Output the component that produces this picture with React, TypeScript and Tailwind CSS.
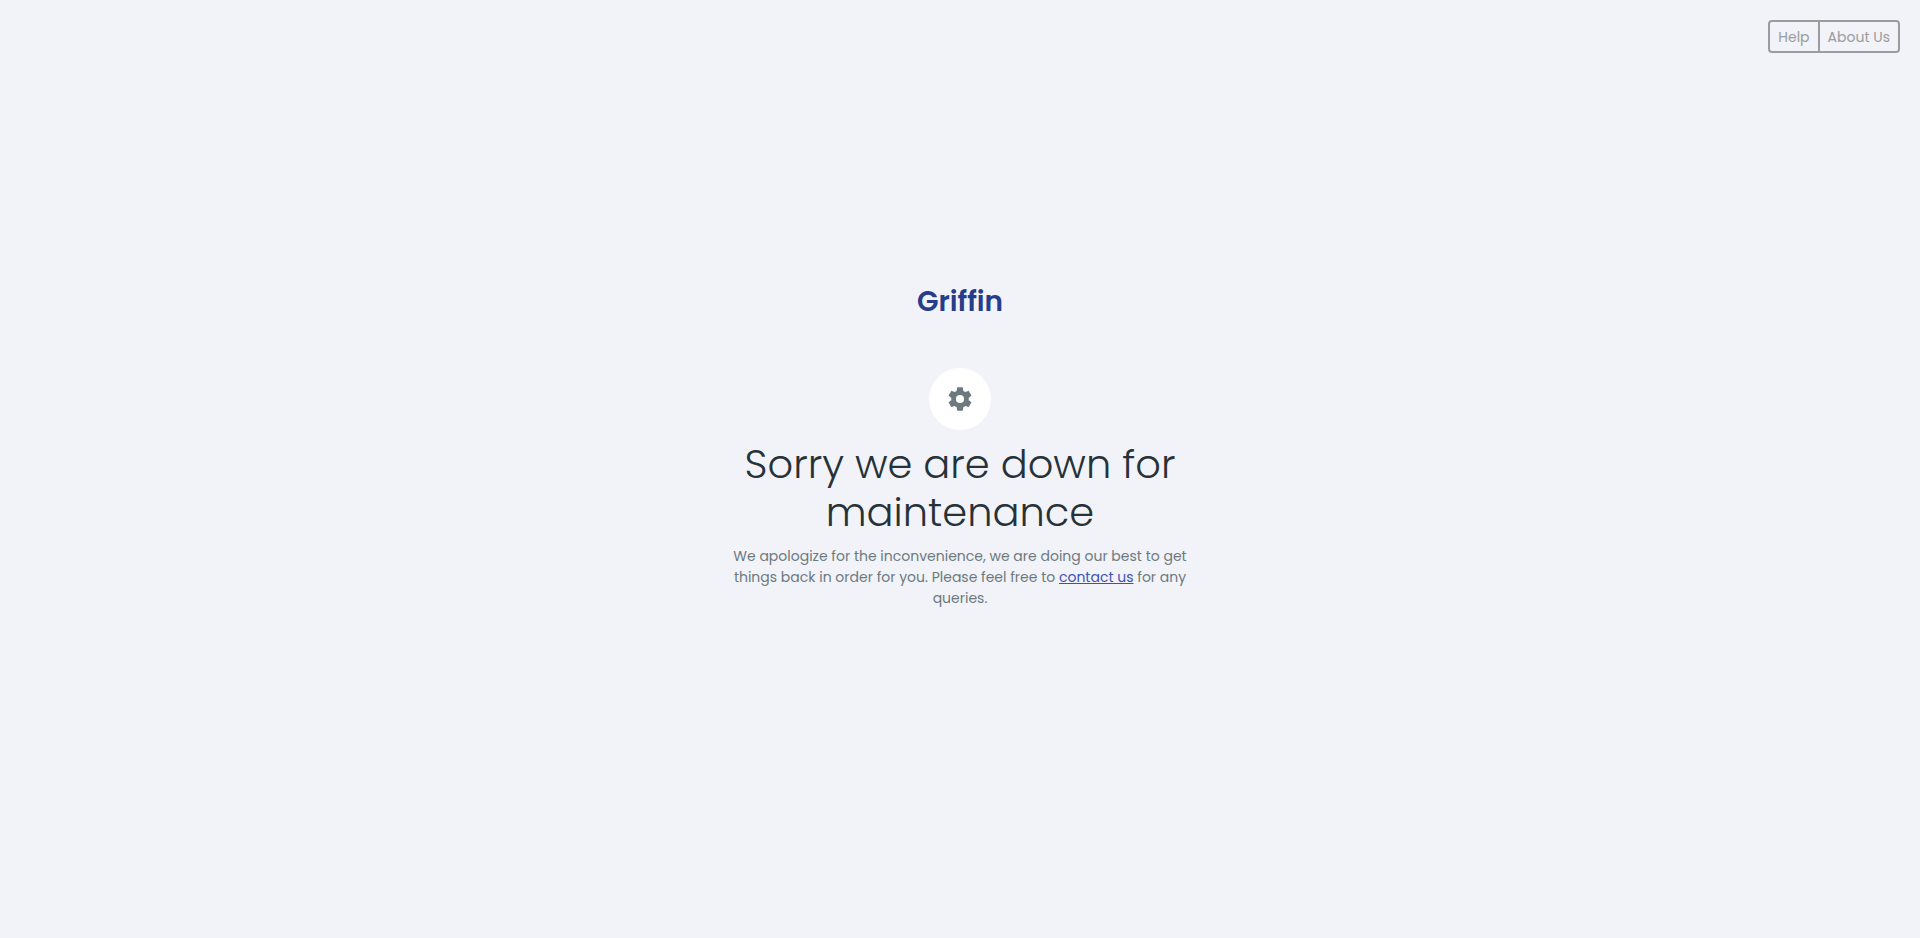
function GearIcon() {
  return (
    <svg viewBox="0 0 24 24" className="size-7 fill-[#6c7a80]" aria-hidden="true">
      <path d="M12,15.5A3.5,3.5 0 0,1 8.5,12A3.5,3.5 0 0,1 12,8.5A3.5,3.5 0 0,1 15.5,12A3.5,3.5 0 0,1 12,15.5M19.43,12.97C19.47,12.65 19.5,12.33 19.5,12C19.5,11.67 19.47,11.34 19.43,11L21.54,9.37C21.73,9.22 21.78,8.95 21.66,8.73L19.66,5.27C19.54,5.05 19.27,4.96 19.05,5.05L16.56,6.05C16.04,5.66 15.5,5.32 14.87,5.07L14.5,2.42C14.46,2.18 14.25,2 14,2H10C9.75,2 9.54,2.18 9.5,2.42L9.13,5.07C8.5,5.32 7.96,5.66 7.44,6.05L4.95,5.05C4.73,4.96 4.46,5.05 4.34,5.27L2.34,8.73C2.21,8.95 2.27,9.22 2.46,9.37L4.57,11C4.53,11.34 4.5,11.67 4.5,12C4.5,12.33 4.53,12.65 4.57,12.97L2.46,14.63C2.27,14.78 2.21,15.05 2.34,15.27L4.34,18.73C4.46,18.95 4.73,19.03 4.95,18.95L7.44,17.94C7.96,18.34 8.5,18.68 9.13,18.93L9.5,21.58C9.54,21.82 9.75,22 10,22H14C14.25,22 14.46,21.82 14.5,21.58L14.87,18.93C15.5,18.67 16.04,18.34 16.56,17.94L19.05,18.95C19.27,19.03 19.54,18.95 19.66,18.73L21.66,15.27C21.78,15.05 21.73,14.78 21.54,14.63L19.43,12.97Z" />
    </svg>
  );
}

export default function App() {
  return (
    <div className="flex min-h-screen flex-col bg-[#f1f3f8] font-['Poppins','Inter',sans-serif] text-sm text-[#6c7a80]">
      <header className="flex h-[53px] justify-end px-5 pt-5">
        <nav className="flex divide-x-2 divide-[#9a9c9e] rounded border-2 border-[#9a9c9e] text-[#9a9c9e]">
          <a href="#help" className="flex items-center px-2">Help</a>
          <a href="#about" className="flex items-center px-2">About Us</a>
        </nav>
      </header>
      <main className="flex flex-1 flex-col items-center justify-center pb-[101px] text-center">
        <a href="#home" className="text-[28px] leading-10 font-semibold text-[#273c8b]">Griffin</a>
        <div className="mt-[46px] flex size-[62px] items-center justify-center rounded-full bg-white">
          <GearIcon />
        </div>
        <h1 className="mt-[10px] max-w-[460px] text-[40px] leading-[48px] font-light text-[#263238]">
          Sorry we are down for maintenance
        </h1>
        <p className="mt-[10px] max-w-[460px] leading-[21px]">
          We apologize for the inconvenience, we are doing our best to get things back in order for you. Please feel free to{' '}
          <a href="#contact" className="inline-block leading-[21px] text-[#3f51b5] underline">contact us</a> for any queries.
        </p>
      </main>
    </div>
  );
}
